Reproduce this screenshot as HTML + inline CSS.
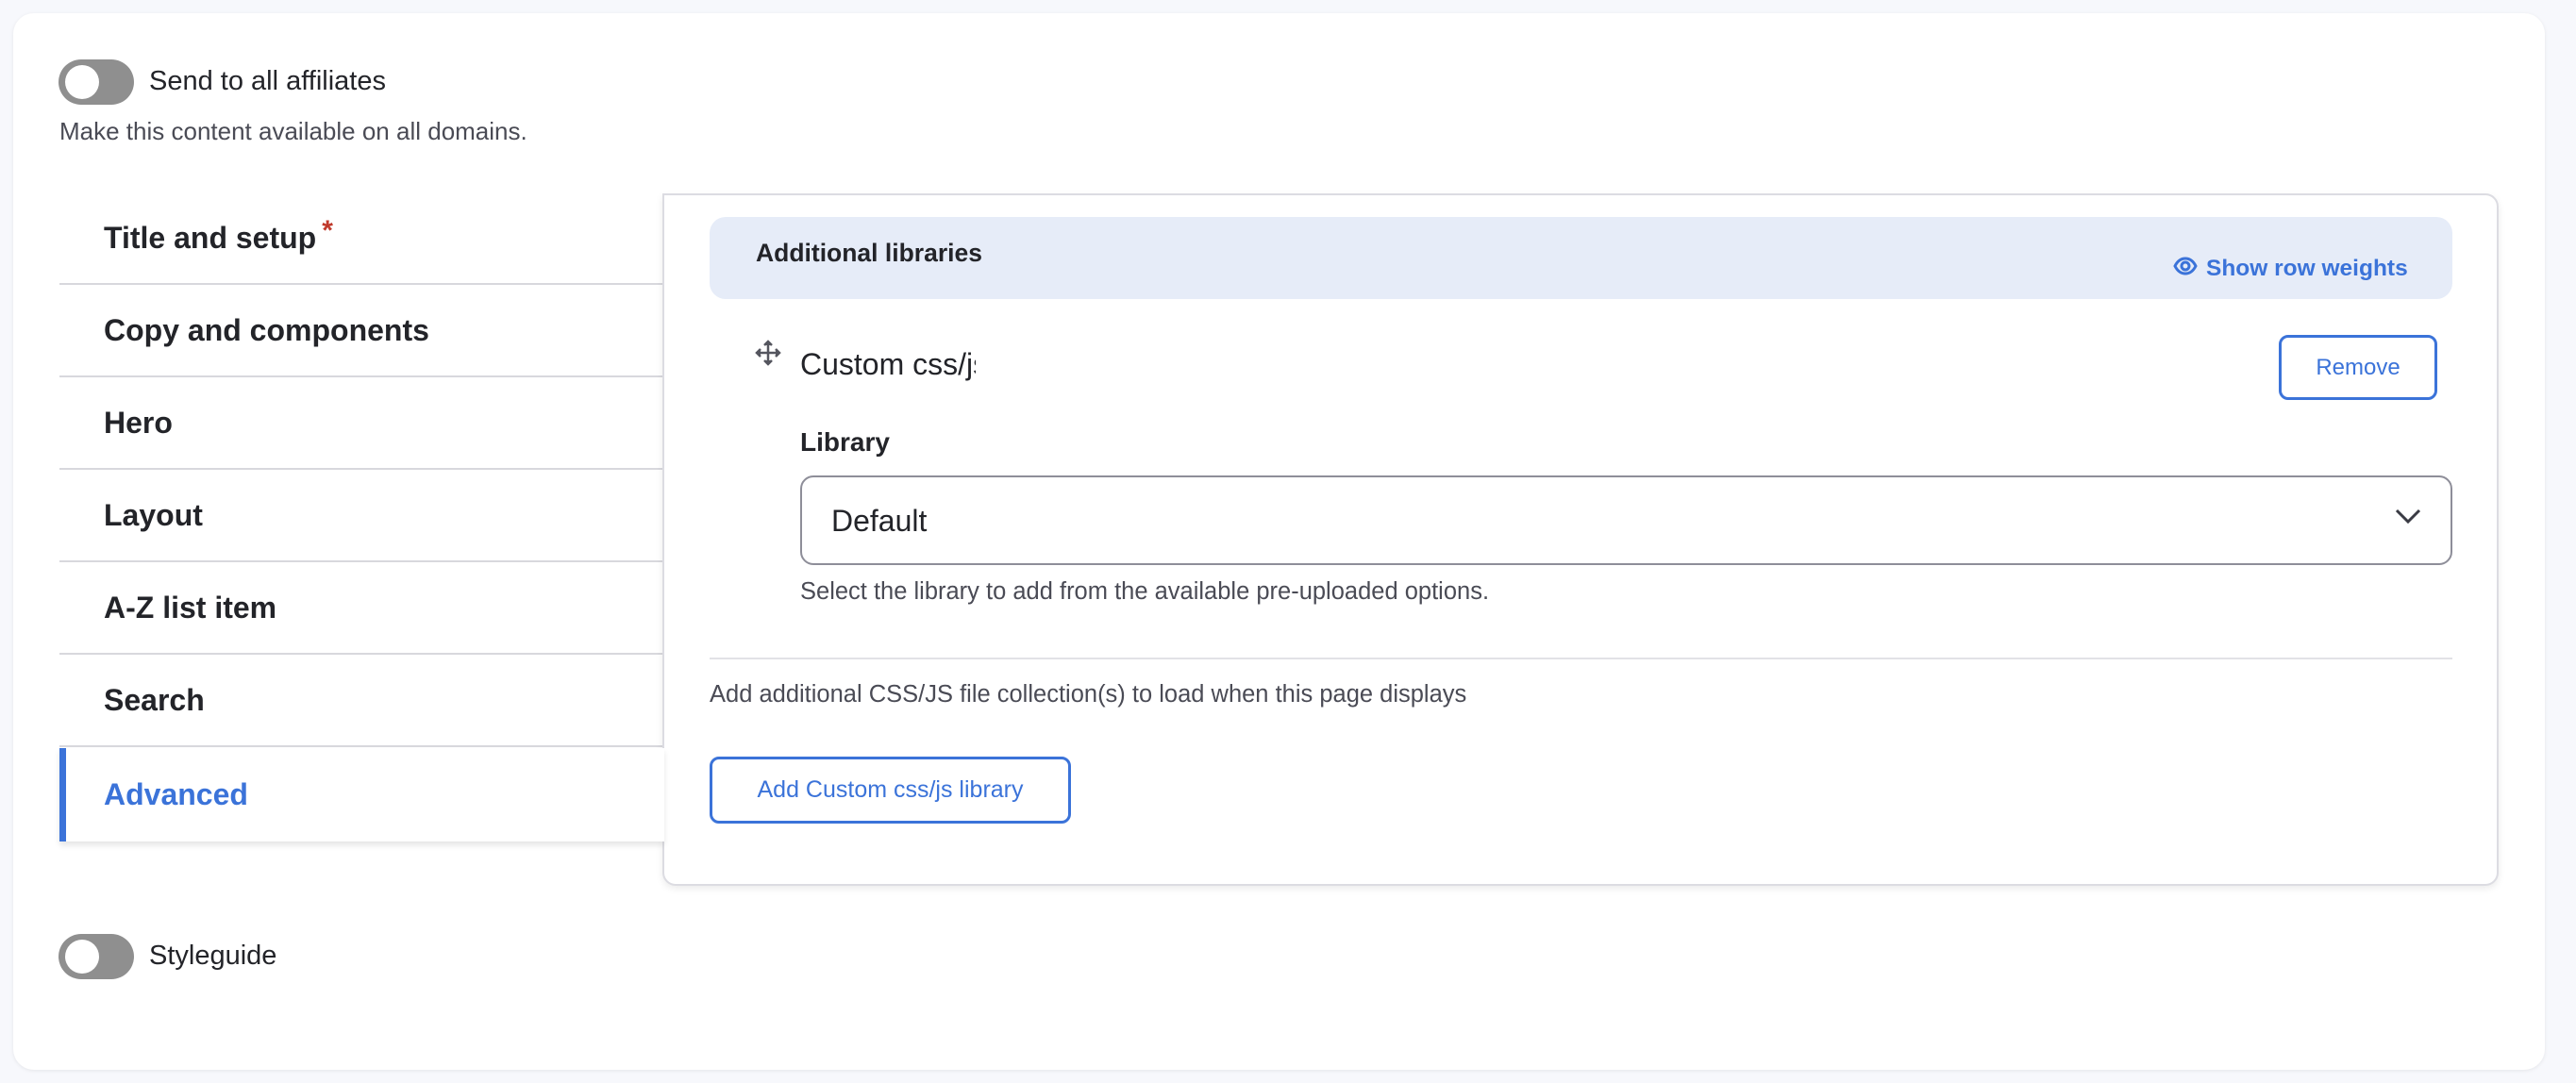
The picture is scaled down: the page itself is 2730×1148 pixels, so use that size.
<!DOCTYPE html>
<html><head><meta charset="utf-8"><style>
*{box-sizing:border-box;margin:0;padding:0}
body{width:2730px;height:1148px;background:#f7f8fc;font-family:"Liberation Sans",sans-serif;color:#232429;position:relative;overflow:hidden}
.abs{position:absolute}
.card{left:14px;top:14px;width:2683px;height:1120px;background:#fff;border-radius:22px;box-shadow:0 1px 4px rgba(0,0,0,.08)}
.tog{width:80px;height:48px;border-radius:24px;background:#8f8f8f}
.tog::after{content:"";position:absolute;left:7px;top:6px;width:36px;height:36px;border-radius:50%;background:#fff}
.t28{font-size:29px;line-height:1}
.tab{left:63px;width:640px;height:97px;border-bottom:2px solid #d8d8dd;font-weight:bold;font-size:32px;padding-left:47px;display:flex;align-items:center}
.panel{left:702px;top:205px;width:1946px;height:734px;border:2px solid #dcdce2;border-radius:0 14px 14px 14px;background:#fff;box-shadow:0 3px 8px rgba(0,0,0,.08)}
.btn{border:3.5px solid #3b73d9;border-radius:10px;color:#3b73d9;font-size:24px;display:flex;align-items:center;justify-content:center;background:#fff}
</style></head><body>
<div class="abs card"></div>
<div class="abs tog" style="left:62px;top:63px"></div>
<div class="abs t28" style="left:158px;top:72px">Send to all affiliates</div>
<div class="abs" style="left:63px;top:124px;font-size:26px;color:#4a4b55">Make this content available on all domains.</div>

<div class="abs tab" style="top:205px">Title and setup<span style="color:#c0392b;font-size:30px;position:relative;top:-8px;margin-left:6px">*</span></div>
<div class="abs tab" style="top:303px">Copy and components</div>
<div class="abs tab" style="top:401px">Hero</div>
<div class="abs tab" style="top:499px">Layout</div>
<div class="abs tab" style="top:597px">A-Z list item</div>
<div class="abs tab" style="top:695px">Search</div>

<div class="abs panel"></div>
<div class="abs tab" style="top:793px;height:99px;border-bottom:none;border-left:7px solid #3b73d9;padding-left:40px;color:#3b73d9;width:641px;background:#fff;box-shadow:0 4px 6px rgba(0,0,0,.1)">Advanced</div>

<div class="abs" style="left:752px;top:230px;width:1847px;height:87px;background:#e6ecf8;border-radius:17px"></div>
<div class="abs" style="left:801px;top:253px;font-size:26.5px;font-weight:bold;color:#232429">Additional libraries</div>
<svg class="abs" style="left:2303px;top:271px" width="26" height="22" viewBox="0 0 26 22"><path d="M2 11C5 5 9 3 13 3s8 2 11 8c-3 6-7 8-11 8S5 17 2 11z" fill="none" stroke="#3b73d9" stroke-width="3"/><circle cx="13" cy="11" r="4" fill="none" stroke="#3b73d9" stroke-width="3"/></svg>
<div class="abs" style="left:2338px;top:271px;font-size:24.5px;font-weight:bold;color:#3b73d9">Show row weights</div>

<svg class="abs" style="left:799px;top:359px" width="30" height="30" viewBox="0 0 30 30" fill="none" stroke="#55565f" stroke-width="2.5"><path d="M15 3v24M3 15h24"/><path d="M11 7l4-4 4 4M11 23l4 4 4-4M7 11l-4 4 4 4M23 11l4 4-4 4" fill="#55565f"/></svg>
<div class="abs" style="left:848px;top:368px;font-size:32px;width:202px;overflow:hidden;white-space:nowrap"><div style="width:186px;overflow:hidden">Custom css/js</div></div>
<div class="abs btn" style="left:2415px;top:355px;width:168px;height:69px">Remove</div>

<div class="abs" style="left:848px;top:453px;font-size:28px;font-weight:bold;color:#232429">Library</div>
<div class="abs" style="left:848px;top:504px;width:1751px;height:95px;border:2px solid #8e8e99;border-radius:14px"></div>
<div class="abs" style="left:881px;top:534px;font-size:32px">Default</div>
<svg class="abs" style="left:2538px;top:538px" width="28" height="18" viewBox="0 0 28 18"><path d="M2 3l12 12L26 3" fill="none" stroke="#3a3b44" stroke-width="3"/></svg>
<div class="abs" style="left:848px;top:613px;font-size:25.5px;color:#4a4b55">Select the library to add from the available pre-uploaded options.</div>

<div class="abs" style="left:752px;top:697px;width:1847px;height:2px;background:#e2e2e6"></div>
<div class="abs" style="left:752px;top:722px;font-size:25.5px;color:#4a4b55">Add additional CSS/JS file collection(s) to load when this page displays</div>
<div class="abs btn" style="left:752px;top:802px;width:383px;height:71px;font-size:25px">Add Custom css/js library</div>

<div class="abs tog" style="left:62px;top:990px"></div>
<div class="abs t28" style="left:158px;top:999px">Styleguide</div>
</body></html>
